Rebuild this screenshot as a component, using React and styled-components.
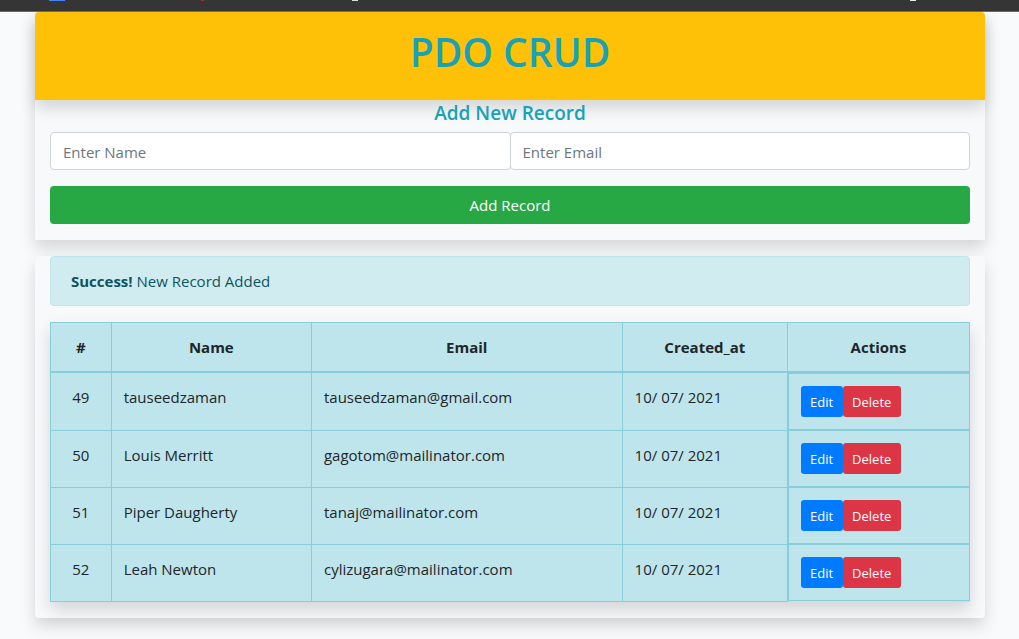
import React from 'react';
import styled, { createGlobalStyle } from 'styled-components';

const GlobalStyle = createGlobalStyle`
  *, *::before, *::after { box-sizing: border-box; }
  body {
    margin: 0;
    background: #f8fafc;
    color: #212529;
    font-family: "Open Sans", "Noto Sans", sans-serif;
    font-size: 15px;
    line-height: 24px;
  }
`;

const shadow = '0 8px 16px rgba(0, 0, 0, 0.15)';

const BrowserBar = styled.div`
  position: relative;
  z-index: 1;
  height: 12px;
  background: #353535;
  border-bottom: 1px solid #6a6a6a;
`;

const BarIcons = styled.svg`
  display: block;
`;

const Page = styled.main`
  padding: 0 34px 21px 35px;
`;

const FormCard = styled.section`
  background: #f8f9fa;
  border-radius: 4px 4px 0 0;
  box-shadow: ${shadow};
  margin-bottom: 16px;
`;

const Banner = styled.header`
  padding: 16px 16px 24px;
  background: #ffc107;
  border-radius: 4px 4px 0 0;
  box-shadow: ${shadow};
  text-align: center;
`;

const Title = styled.h1`
  margin: 0;
  color: #17a2b8;
  font-size: 39px;
  line-height: 48px;
  font-weight: 600;
`;

const RecordForm = styled.form`
  padding: 0 15px 16px;
`;

const FormTitle = styled.h2`
  margin: 0;
  padding-bottom: 6px;
  color: #17a2b8;
  font-size: 19px;
  line-height: 26px;
  font-weight: 600;
  text-align: center;
`;

const Fields = styled.div`
  display: flex;
  margin-bottom: 16px;
`;

const Field = styled.input`
  flex: 1 1 0;
  min-width: 0;
  height: 38px;
  padding: 7px 12px 5px;
  border: 1px solid #ced4da;
  border-radius: 4px;
  background: #fff;
  color: #495057;
  font: inherit;
  & + & { margin-left: -1px; }
  &::placeholder { color: #6c757d; opacity: 1; }
`;

const colors = { success: '#28a745', primary: '#007bff', danger: '#dc3545' };

const Button = styled.button`
  border: 0;
  border-radius: 4px;
  background: ${(p) => colors[p.$tone]};
  color: #fff;
  font: inherit;
  cursor: pointer;
`;

const SubmitButton = styled(Button)`
  display: block;
  width: 100%;
  height: 38px;
`;

const SmallButton = styled(Button)`
  height: 31px;
  padding: 0 10px 0 9px;
  border-radius: 3px;
  font-size: 13px;
`;

const ListCard = styled.section`
  position: relative;
  padding: 0 15px 16px;
  background: #f8f9fa;
  border-radius: 4px;
  box-shadow: ${shadow};
`;

const Alert = styled.div`
  margin-bottom: 16px;
  padding: 12px 20px;
  border: 1px solid #bee5eb;
  border-radius: 4px;
  background: #d1ecf1;
  color: #0c5460;
`;

const Table = styled.table`
  width: 100%;
  table-layout: fixed;
  border-collapse: collapse;
  background: #bee5eb;
  box-shadow: ${shadow};
`;

const Col = styled.col`
  width: ${(p) => p.$share}%;
`;

const HeadCell = styled.th`
  padding: 12px;
  border: 1px solid #86cfda;
  border-bottom-width: 2px;
  font-weight: 700;
`;

const Cell = styled.td`
  padding: 12px;
  border: 1px solid #86cfda;
  text-align: ${(p) => (p.$center ? 'center' : 'left')};
  vertical-align: top;
`;

const ActionsCell = styled(Cell)`
  display: flex;
`;

const columns = [
  { label: '#', share: 6.6 },
  { label: 'Name', share: 21.8 },
  { label: 'Email', share: 33.8 },
  { label: 'Created_at', share: 18 },
  { label: 'Actions', share: 19.8 },
];

const records = [
  { id: 49, name: 'tauseedzaman', email: 'tauseedzaman@gmail.com', created: '10/ 07/ 2021' },
  { id: 50, name: 'Louis Merritt', email: 'gagotom@mailinator.com', created: '10/ 07/ 2021' },
  { id: 51, name: 'Piper Daugherty', email: 'tanaj@mailinator.com', created: '10/ 07/ 2021' },
  { id: 52, name: 'Leah Newton', email: 'cylizugara@mailinator.com', created: '10/ 07/ 2021' },
];

export default function App() {
  return (
    <>
      <GlobalStyle />
      <BrowserBar>
        <BarIcons width="100%" height="4" aria-hidden="true">
          <rect x="49" width="16" height="1" fill="#4285f4" />
          <rect x="201" width="3" height="1" fill="#c5221f" />
          <rect x="352" width="6" height="1" fill="#dadce0" />
          <rect x="910" width="6" height="1" fill="#e8eaed" />
        </BarIcons>
      </BrowserBar>
      <Page>
        <FormCard>
          <Banner>
            <Title>PDO CRUD</Title>
          </Banner>
          <RecordForm onSubmit={(e) => e.preventDefault()}>
            <FormTitle>Add New Record</FormTitle>
            <Fields>
              <Field type="text" name="name" placeholder="Enter Name" aria-label="Name" />
              <Field type="email" name="email" placeholder="Enter Email" aria-label="Email" />
            </Fields>
            <SubmitButton type="submit" $tone="success">Add Record</SubmitButton>
          </RecordForm>
        </FormCard>
        <ListCard>
          <Alert role="alert">
            <strong>Success!</strong> New Record Added
          </Alert>
          <Table>
            <colgroup>
              {columns.map((c) => <Col key={c.label} $share={c.share} />)}
            </colgroup>
            <thead>
              <tr>
                {columns.map((c) => <HeadCell key={c.label} scope="col">{c.label}</HeadCell>)}
              </tr>
            </thead>
            <tbody>
              {records.map((r) => (
                <tr key={r.id}>
                  <Cell $center>{r.id}</Cell>
                  <Cell>{r.name}</Cell>
                  <Cell>{r.email}</Cell>
                  <Cell>{r.created}</Cell>
                  <ActionsCell>
                    <SmallButton type="button" $tone="primary">Edit</SmallButton>
                    <SmallButton type="button" $tone="danger">Delete</SmallButton>
                  </ActionsCell>
                </tr>
              ))}
            </tbody>
          </Table>
        </ListCard>
      </Page>
    </>
  );
}
